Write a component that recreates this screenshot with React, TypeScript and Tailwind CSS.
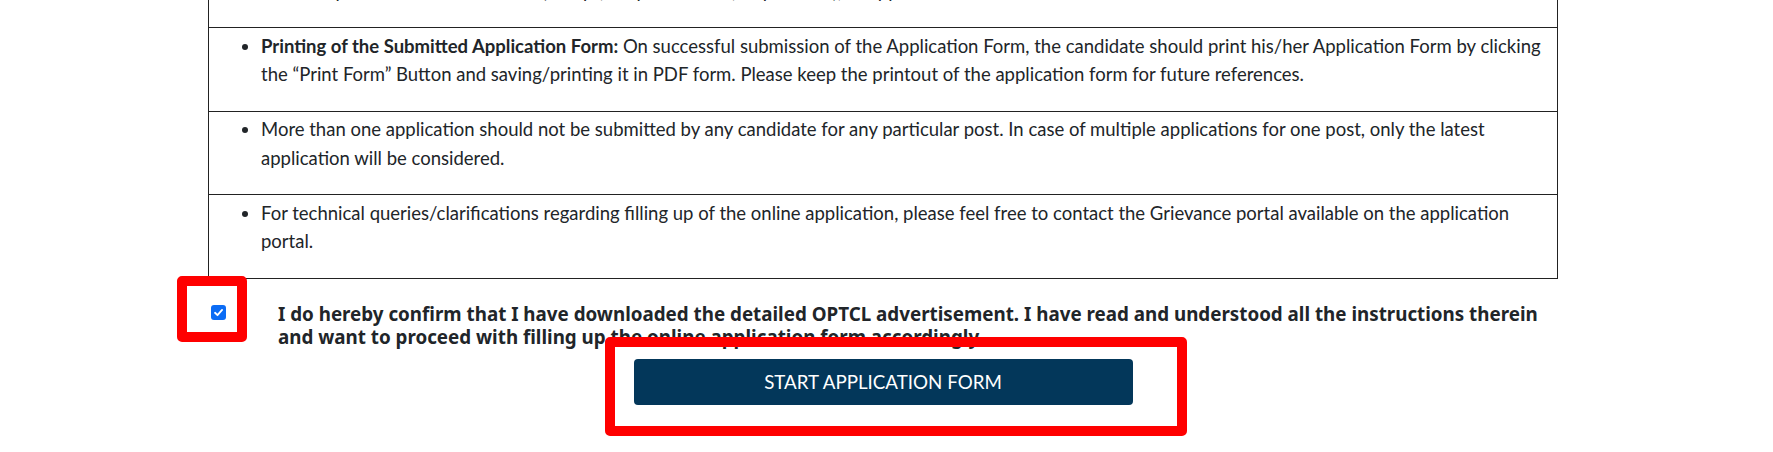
import React from "react";

function Row({ children, last }: { children: React.ReactNode; last?: boolean }) {
  return (
    <div
      className={
        last
          ? "border-x border-b border-[#222] pl-[52px] pr-[10px] pt-[3.5px] pb-[22px]"
          : "border-x border-b border-[#222] pl-[52px] pr-[10px] pt-[3.7px] pb-[21.9px]"
      }
    >
      <ul className="list-disc">
        <li>{children}</li>
      </ul>
    </div>
  );
}

export default function App() {
  return (
    <div className="relative w-full h-[452px] overflow-hidden bg-white text-[#212529] font-['Lato','Liberation_Sans',sans-serif]">
      <div className="ml-[208px] w-[1350px] -mt-[55.5px] text-[18.5px] leading-[28.5px]">
        <Row last>
          <b>Payment of Application Fee:</b> The candidate shall pay the application fee through
          the payment gateway using Debit Card/Credit Card/Net Banking/UPI, and the fee once paid
          will not be refunded (except, in special cases, as per rules), as applicable.
        </Row>
        <Row>
          <b>Printing of the Submitted Application Form:</b> On successful submission of the
          Application Form, the candidate should print his/her Application Form by clicking the
          “Print Form” Button and saving/printing it in PDF form. Please keep the printout of the
          application form for future references.
        </Row>
        <Row>
          More than one application should not be submitted by any candidate for any particular
          post. In case of multiple applications for one post, only the latest application will be
          considered.
        </Row>
        <Row>
          For technical queries/clarifications regarding filling up of the online application,
          please feel free to contact the Grievance portal available on the application portal.
        </Row>
      </div>

      <div className="ml-[208px] w-[1350px] flex pt-[24px]">
        <div className="w-[70px] shrink-0 pl-[3px] pt-[2px]">
          <div className="w-[15px] h-[15px] rounded-[3px] bg-[#0b6cf5] flex items-center justify-center">
            <svg width="11" height="11" viewBox="0 0 12 12">
              <path
                d="M2.2 6.3 L4.9 8.9 L9.9 3.2"
                fill="none"
                stroke="#fff"
                strokeWidth="2"
                strokeLinecap="round"
                strokeLinejoin="round"
              />
            </svg>
          </div>
        </div>
        <p className="flex-1 font-bold text-[18.8px] leading-[23.5px] font-['Noto_Sans','Open_Sans',sans-serif]">
          I do hereby confirm that I have downloaded the detailed OPTCL advertisement. I have read
          and understood all the instructions therein and want to proceed with filling up the
          online application form accordingly.
        </p>
      </div>

      <div className="ml-[208px] w-[1350px] pt-[9.5px]">
        <button className="mx-auto flex items-center justify-center w-[499px] h-[46px] rounded-[4px] bg-[#03375a] text-white text-[18.75px] font-['Lato','Liberation_Sans',sans-serif]">
          START APPLICATION FORM
        </button>
      </div>

      <div className="absolute left-[177px] top-[276px] w-[70px] h-[66px] border-[10px] border-[#ff0000] rounded-[5px]" />
      <div className="absolute left-[605px] top-[337px] w-[582px] h-[99px] border-[10px] border-[#ff0000] rounded-[5px]" />
    </div>
  );
}
